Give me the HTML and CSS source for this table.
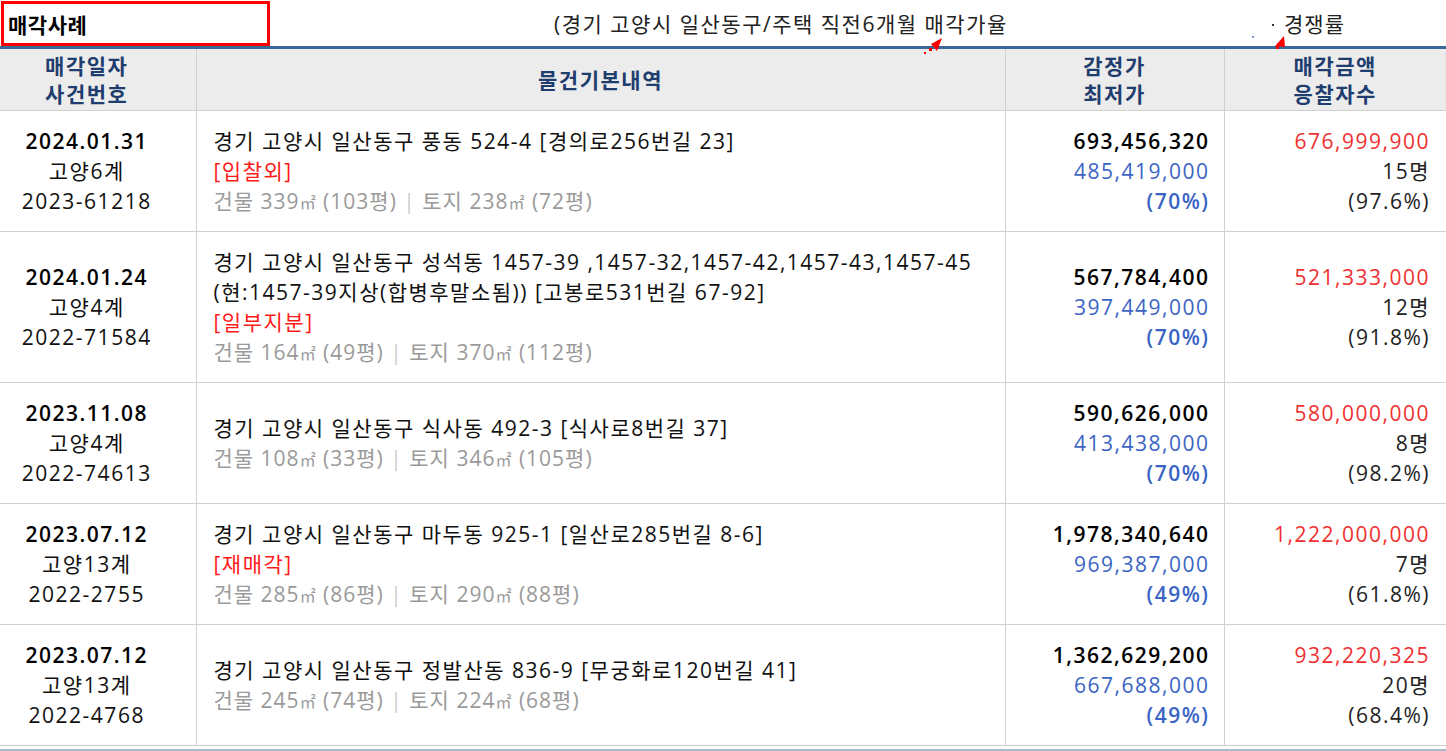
FILE: index.html
```html
<!DOCTYPE html>
<html>
<head>
  <title>매각사례</title>
  <link rel="stylesheet" href="styles.css">
</head>
<body>
  <div class="top">
    <div class="title-box">매각사례</div>
    <div class="summary">(경기 고양시 일산동구/주택 직전6개월 매각가율</div>
    <div class="dots"><span class="dot-blue"></span><span class="dot-black"></span></div>
    <div class="rate">경쟁률</div>
    <!-- red arrows drawn over the header line -->
    <svg class="arrow arrow-1" width="22" height="18" viewBox="0 0 22 18">
      <polygon points="20,0 9,6 15,13" fill="#ff0000"/>
      <rect x="7" y="10" width="3" height="3" fill="#ff0000"/>
      <rect x="2" y="14" width="2" height="2" fill="#ff0000"/>
    </svg>
    <svg class="arrow arrow-2" width="14" height="14" viewBox="0 0 14 14">
      <polygon points="10,0 1,10 11,11" fill="#ff0000"/>
      <rect x="2" y="10" width="3" height="3" fill="#ff0000"/>
    </svg>
  </div>

  <table class="cases">
    <colgroup>
      <col class="c-date">
      <col class="c-info">
      <col class="c-price">
      <col class="c-sale">
    </colgroup>
    <thead>
      <tr>
        <th class="h-date">매각일자<br>사건번호</th>
        <th>물건기본내역</th>
        <th>감정가<br>최저가</th>
        <th>매각금액<br>응찰자수</th>
      </tr>
    </thead>
    <tbody>
      <tr>
        <td class="date"><b>2024.01.31</b><br>고양6계<br>2023-61218</td>
        <td class="info">경기 고양시 일산동구 풍동 524-4 [경의로256번길 23]<br><span class="tag">[입찰외]</span><br><span class="area">건물 339<span class="sq">㎡</span> (103평) <i>|</i> 토지 238<span class="sq">㎡</span> (72평)</span></td>
        <td class="price"><b>693,456,320</b><br><span class="low">485,419,000</span><br><span class="pct">(70%)</span></td>
        <td class="sale"><span class="sold">676,999,900</span><br>15명<br>(97.6%)</td>
      </tr>
      <tr>
        <td class="date"><b>2024.01.24</b><br>고양4계<br>2022-71584</td>
        <td class="info">경기 고양시 일산동구 성석동 1457-39 ,1457-32,1457-42,1457-43,1457-45<br>(현:1457-39지상(합병후말소됨)) [고봉로531번길 67-92]<br><span class="tag">[일부지분]</span><br><span class="area">건물 164<span class="sq">㎡</span> (49평) <i>|</i> 토지 370<span class="sq">㎡</span> (112평)</span></td>
        <td class="price"><b>567,784,400</b><br><span class="low">397,449,000</span><br><span class="pct">(70%)</span></td>
        <td class="sale"><span class="sold">521,333,000</span><br>12명<br>(91.8%)</td>
      </tr>
      <tr>
        <td class="date"><b>2023.11.08</b><br>고양4계<br>2022-74613</td>
        <td class="info">경기 고양시 일산동구 식사동 492-3 [식사로8번길 37]<br><span class="area">건물 108<span class="sq">㎡</span> (33평) <i>|</i> 토지 346<span class="sq">㎡</span> (105평)</span></td>
        <td class="price"><b>590,626,000</b><br><span class="low">413,438,000</span><br><span class="pct">(70%)</span></td>
        <td class="sale"><span class="sold">580,000,000</span><br>8명<br>(98.2%)</td>
      </tr>
      <tr>
        <td class="date"><b>2023.07.12</b><br>고양13계<br>2022-2755</td>
        <td class="info">경기 고양시 일산동구 마두동 925-1 [일산로285번길 8-6]<br><span class="tag">[재매각]</span><br><span class="area">건물 285<span class="sq">㎡</span> (86평) <i>|</i> 토지 290<span class="sq">㎡</span> (88평)</span></td>
        <td class="price"><b>1,978,340,640</b><br><span class="low">969,387,000</span><br><span class="pct">(49%)</span></td>
        <td class="sale"><span class="sold">1,222,000,000</span><br>7명<br>(61.8%)</td>
      </tr>
      <tr>
        <td class="date"><b>2023.07.12</b><br>고양13계<br>2022-4768</td>
        <td class="info">경기 고양시 일산동구 정발산동 836-9 [무궁화로120번길 41]<br><span class="area">건물 245<span class="sq">㎡</span> (74평) <i>|</i> 토지 224<span class="sq">㎡</span> (68평)</span></td>
        <td class="price"><b>1,362,629,200</b><br><span class="low">667,688,000</span><br><span class="pct">(49%)</span></td>
        <td class="sale"><span class="sold">932,220,325</span><br>20명<br>(68.4%)</td>
      </tr>
    </tbody>
  </table>
  <div class="bottom-bar"></div>
</body>
</html>
```

FILE: styles.css
```css
body {
  margin: 0;
  padding: 0;
  background-color: #fff;
  color: #111;
  font-family: "Open Sans", "Noto Sans CJK KR", sans-serif;
  font-size: 21px;
  letter-spacing: 1.5px;
}

.top {
  position: relative;
  display: flex;
  align-items: center;
  height: 46px;
}

.title-box {
  box-sizing: border-box;
  width: 269px;
  height: 45px;
  margin-left: 1px;
  margin-top: 1px;
  padding-left: 4px;
  border: 3px solid #ff0000;
  display: flex;
  align-items: center;
  font-weight: bold;
  color: #000;
  letter-spacing: 0.5px;
}

.summary {
  margin-left: 284px;
  width: 454px;
  white-space: nowrap;
  color: #222;
}

.dots {
  margin-left: 244px;
  width: 32px;
  height: 46px;
  position: relative;
}

.dot-blue {
  position: absolute;
  left: 0;
  top: 36px;
  width: 2px;
  height: 2px;
  background-color: #7a9ad0;
}

.dot-black {
  position: absolute;
  left: 20px;
  top: 24px;
  width: 2px;
  height: 2px;
  background-color: #333;
}

.rate {
  margin-left: 0;
  color: #222;
  letter-spacing: 1px;
}

.arrow {
  position: absolute;
}

.arrow-1 {
  left: 922px;
  top: 38px;
}

.arrow-2 {
  left: 1274px;
  top: 36px;
}

.cases {
  width: 1446px;
  border-collapse: collapse;
  table-layout: fixed;
  border-top: 3px solid #3a6898;
}

.c-date { width: 196px; }
.c-info { width: 809px; }
.c-price { width: 219px; }
.c-sale { width: 222px; }

th, td {
  border: 1px solid #d0d0d0;
  vertical-align: middle;
}

th:first-child, td:first-child { border-left: none; }
th:last-child, td:last-child { border-right: none; }

th {
  background-color: #ececec;
  color: #1f3d6e;
  font-weight: bold;
  line-height: 28px;
  height: 61px;
  padding: 0;
  text-align: center;
}

th.h-date {
  padding-right: 22px;
}

td {
  line-height: 30px;
  padding: 15px 0;
}

.date {
  text-align: center;
  padding-right: 22px;
  color: #111;
}

.date b {
  color: #000;
  font-weight: 600;
}

.info {
  padding-left: 17px;
  color: #111;
}

.tag {
  color: #ff1a1a;
}

.area {
  color: #9a9a9a;
  letter-spacing: 1px;
}

.area i {
  font-style: normal;
  color: #ccc;
}

.sq {
  font-size: 16px;
  line-height: 0;
}

.price {
  text-align: right;
  padding-right: 14px;
}

.price b {
  color: #000;
  font-weight: 600;
}

.low {
  color: #3a64c4;
}

.pct {
  color: #3a64c4;
  font-weight: 600;
}

.sale {
  text-align: right;
  padding-right: 16px;
  color: #222;
}

.sold {
  color: #f03030;
}

.bottom-bar {
  margin-top: 3px;
  height: 3px;
  background-color: #aab8cc;
}
```
